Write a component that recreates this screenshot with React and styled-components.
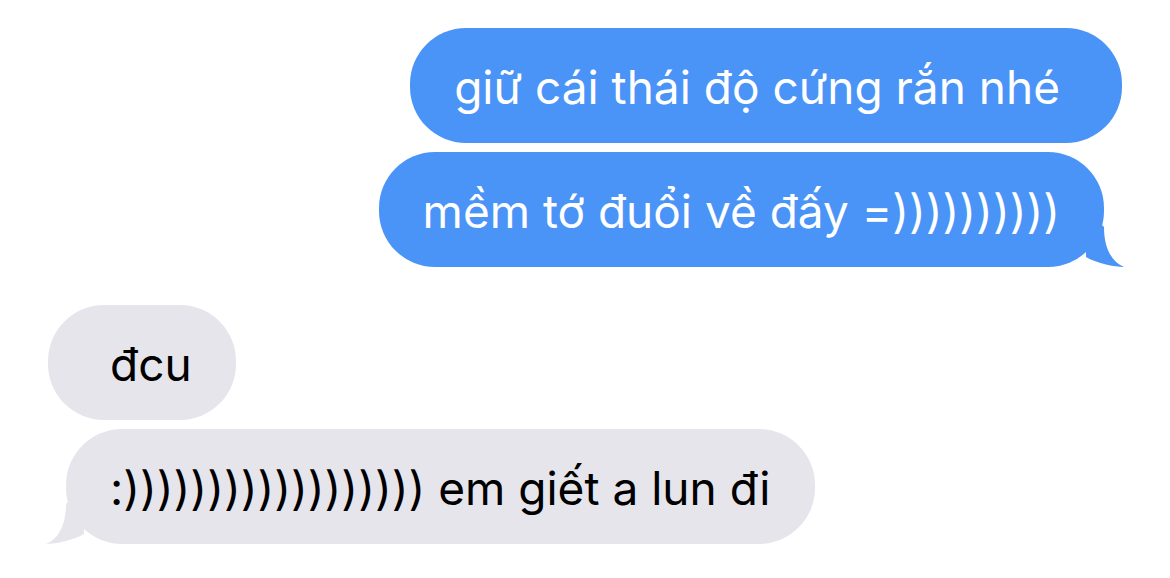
import React from 'react';
import styled, { createGlobalStyle, css } from 'styled-components';

const GlobalStyle = createGlobalStyle`
    html, body {
        margin: 0;
        padding: 0;
        background: #fff;
    }
    body {
        font-family: Inter, "Noto Sans", "Liberation Sans", sans-serif;
        -webkit-font-smoothing: antialiased;
    }
`

const BLUE = '#4a93f7'
const GRAY = '#e6e5eb'
const TAIL = 18

const Thread = styled.div`
    display: flex;
    flex-direction: column;
    padding: 28px 48px 0;
    width: 1170px;
    height: 578px;
    box-sizing: border-box;
    overflow: hidden;
`

const Group = styled.div`
    display: flex;
    flex-direction: column;
    align-items: ${p => p.$mine ? 'flex-end' : 'flex-start'};
    gap: 9px;
    margin-bottom: 38px;
`

const Bubble = styled.div`
    position: relative;
    box-sizing: border-box;
    height: 115px;
    padding: 34px 44px 30px;
    border-radius: 56px;
    font-size: 46px;
    line-height: 51px;
    white-space: nowrap;
    background: ${p => p.$mine ? BLUE : GRAY};
    color: ${p => p.$mine ? '#fff' : '#000'};

    ${p => p.$mine && !p.$tail && css`padding-right: ${44 + TAIL}px;`}
    ${p => p.$mine && p.$tail && css`margin-right: ${TAIL}px;`}
    ${p => !p.$mine && !p.$tail && css`padding-left: ${44 + TAIL}px;`}
    ${p => !p.$mine && p.$tail && css`margin-left: ${TAIL}px;`}
`

const TailSvg = styled.svg`
    position: absolute;
    bottom: 0;
    width: 40px;
    height: 42px;
    ${p => p.$mine ? css`right: -20px;` : css`left: -20px;`}
`

const Tail = ({ mine }) => (
    <TailSvg $mine={mine} viewBox="-20 -42 40 42">
        {mine
            ? <path d="M-2 -42 L0 -40 C0 -18 8 -5 20 0 C10 0 -8 -4 -18 -10 L-18 -42 Z" fill={BLUE} />
            : <path d="M2 -42 L0 -40 C0 -18 -8 -5 -20 0 C-10 0 8 -4 18 -10 L18 -42 Z" fill={GRAY} />}
    </TailSvg>
)

const Message = ({ mine, tail, children }) => (
    <Bubble $mine={mine} $tail={tail}>
        {children}
        {tail && <Tail mine={mine} />}
    </Bubble>
)

const groups = [
    {
        mine: true,
        messages: ['giữ cái thái độ cứng rắn nhé', 'mềm tớ đuổi về đấy =))))))))))'],
    },
    {
        mine: false,
        messages: ['đcu', ':)))))))))))))))))) em giết a lun đi'],
    },
]

export default function App() {
    return (
        <>
            <GlobalStyle />
            <Thread>
                {groups.map((g, i) => (
                    <Group key={i} $mine={g.mine}>
                        {g.messages.map((m, j) => (
                            <Message key={j} mine={g.mine} tail={j === g.messages.length - 1}>
                                {m}
                            </Message>
                        ))}
                    </Group>
                ))}
            </Thread>
        </>
    )
}
